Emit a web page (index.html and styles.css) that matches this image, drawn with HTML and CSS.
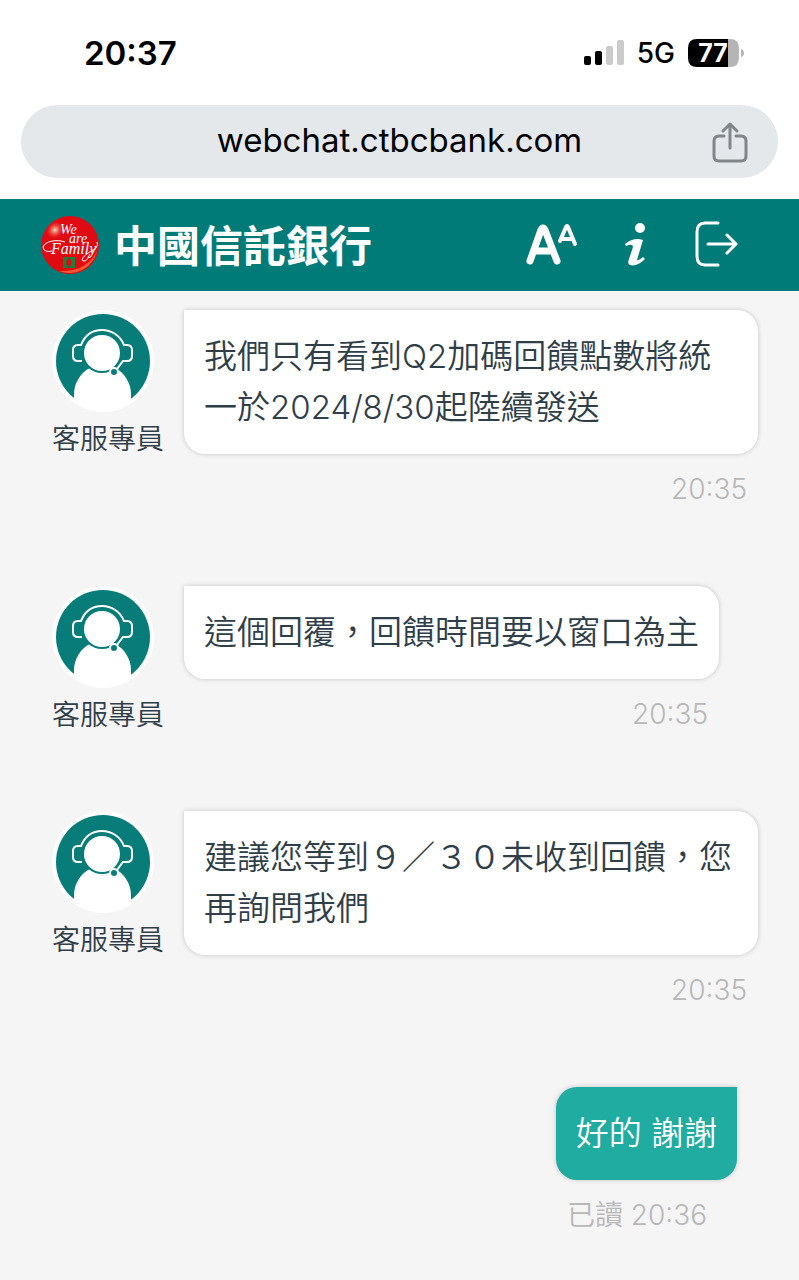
FILE: index.html
```html
<!DOCTYPE html>
<html lang="zh-Hant">
<head>
<meta charset="utf-8">
<meta name="viewport" content="width=device-width, initial-scale=1">
<title>中國信託銀行</title>
<link rel="stylesheet" href="styles.css">
</head>
<body>
<svg width="0" height="0" class="sprite" aria-hidden="true">
  <symbol id="agent" viewBox="0 0 102 102">
    <circle cx="51" cy="51" r="51" fill="#fff"/>
    <circle cx="51" cy="51" r="47" fill="#087c79"/>
    <path d="M22 84C22 73 29 62 38 58H63C72 62 79 73 79 84V91A49 49 0 0 1 22 91Z" fill="#fff"/>
    <circle cx="50" cy="43" r="20" fill="#087c79"/>
    <circle cx="50" cy="43" r="18" fill="#fff"/>
    <path d="M30 51H26Q21 51 21 46V40Q21 35 26 35H29C33 25 41 20 50 20S68 25 72 35H75Q80 35 80 40V46Q80 51 75 51H71L65 59" fill="none" stroke="#fff" stroke-width="2"/>
    <circle cx="62" cy="62" r="4" fill="#087c79" stroke="#fff" stroke-width="2"/>
  </symbol>
</svg>
<div class="status">
  <time class="clock">20:37</time>
  <div class="signals">
    <svg width="40" height="28" viewBox="0 0 40 28" aria-hidden="true"><rect y="17" width="7" height="9" rx="2"/><rect x="11" y="12" width="7" height="14" rx="2"/><rect x="22" y="7" width="7" height="19" rx="2" fill="#cbcbcb"/><rect x="33" y="1" width="7" height="25" rx="2" fill="#cbcbcb"/></svg>
    <span class="network">5G</span>
    <svg width="57" height="28" viewBox="0 0 57 28" role="img" aria-label="77%"><path d="M9 0H40V28H9Q0 28 0 19V9Q0 0 9 0"/><path d="M40 0H42Q51 0 51 9V19Q51 28 42 28H40ZM53 10Q56 11 56 14T53 18Z" fill="#b5b5b5"/><text x="25" y="23" class="charge">77</text></svg>
  </div>
</div>
<div class="address">
  <span class="url">webchat.ctbcbank.com</span>
  <button class="icon share" aria-label="分享"><svg width="36" height="42" viewBox="0 0 36 42"><path d="M12 15H7Q2 15 2 20V35Q2 40 7 40H29Q34 40 34 35V20Q34 15 29 15H24M18 27V4M11 10L18 3L25 10" fill="none" stroke="#81868a" stroke-width="3" stroke-linecap="round" stroke-linejoin="round"/></svg></button>
</div>
<header class="header">
  <svg class="ball" width="60" height="60" viewBox="0 0 60 60" role="img" aria-label="We are Family">
    <defs><radialGradient id="glow"><stop offset="0" stop-color="#ffe2bd"/><stop offset="1" stop-color="#e60c13" stop-opacity="0"/></radialGradient></defs>
    <circle cx="30" cy="30" r="29" fill="#e00a12"/>
    <path d="M57 36A28 28 0 0 1 19 56Q47 57 57 36" fill="#f4582f"/>
    <ellipse cx="15" cy="15" rx="10" ry="9" fill="url(#glow)" transform="rotate(-40 15 15)"/>
    <text x="20" y="19" class="motto">We</text><text x="29" y="28" class="motto">are</text><text x="11" y="39" class="motto family">Family</text>
    <path d="M25 27C17 24 5 26 3 32Q4 38 12 36M50 39Q46 49 42 45Q43 40 55 34Q59 30 57 27" fill="none" stroke="#fff" stroke-width="1"/>
    <path d="M23 42H35V53H23ZM27 45V50H31V45Z" fill="#14823a" fill-rule="evenodd"/><path d="M27 45H31V50H27ZM29 42V45M29 50V53" fill="#e00a12" stroke="#e00a12" stroke-width="1"/>
  </svg>
  <h1 class="brand">中國信託銀行</h1>
  <nav class="actions">
    <button class="icon" aria-label="字體大小"><svg width="52" height="46" viewBox="0 0 52 46" fill="none" stroke="#fff" stroke-linecap="round" stroke-linejoin="round"><path d="M4 39L15 8Q17 4 19 8L31 39M9 29H26" stroke-width="7"/><path d="M34 19L40 5Q41 3 42 5L49 22M35 17H46" stroke-width="4"/></svg></button>
    <button class="icon" aria-label="資訊"><svg width="22" height="46" viewBox="0 0 22 46" fill="#fff"><circle cx="15" cy="6" r="5"/><path d="M1 24L0 22Q9 15 18 18L12 38Q13 39 18 35L20 37Q12 45 5 43Q2 42 4 37L8 25Q8 21 1 24"/></svg></button>
    <button class="icon" aria-label="登出"><svg width="44" height="46" viewBox="0 0 44 46"><path d="M24 1H11Q3 1 3 10V34Q3 43 11 43H24M14 22H42M33 13L42 22L33 31" fill="none" stroke="#fff" stroke-width="3" stroke-linecap="round" stroke-linejoin="round"/></svg></button>
  </nav>
</header>
<main class="chat">
  <article class="row">
    <div class="agent"><svg class="avatar"><use href="#agent"/></svg><span>客服專員</span></div>
    <div class="message"><p class="bubble">我們只有看到Q2加碼回饋點數將統一於2024/8/30起陸續發送</p><time class="time">20:35</time></div>
  </article>
  <article class="row">
    <div class="agent"><svg class="avatar"><use href="#agent"/></svg><span>客服專員</span></div>
    <div class="message"><p class="bubble">這個回覆，回饋時間要以窗口為主</p><time class="time">20:35</time></div>
  </article>
  <article class="row">
    <div class="agent"><svg class="avatar"><use href="#agent"/></svg><span>客服專員</span></div>
    <div class="message"><p class="bubble">建議您等到９／３０未收到回饋，您再詢問我們</p><time class="time">20:35</time></div>
  </article>
  <article class="row sent">
    <div class="message"><p class="bubble">好的 謝謝</p><span class="time">已讀 <time>20:36</time></span></div>
  </article>
</main>
</body>
</html>
```
FILE: styles.css
```css
* { box-sizing: border-box; }
body {
  margin: 0;
  min-height: 100vh;
  display: flex;
  flex-direction: column;
  background: #fff;
  font-family: Inter, "Noto Sans CJK TC", sans-serif;
  color: #303e48;
}
.sprite { position: absolute; }
svg { display: block; flex: none; overflow: visible; }
.status {
  display: flex;
  justify-content: space-between;
  align-items: center;
  padding: 32px 54px 31px 84px;
  color: #000;
}
.clock { font-size: 33px; font-weight: 600; line-height: 42px; }
.signals { display: flex; align-items: center; gap: 13px; }
.network { font-size: 28px; font-weight: 500; line-height: 42px; }
.charge { fill: #fff; font-size: 25px; font-weight: 700; text-anchor: middle; }
.address {
  display: grid;
  grid-template-columns: 36px 1fr 36px;
  align-items: center;
  margin: 0 21px 21px;
  padding: 0 30px;
  min-height: 73px;
  border-radius: 37px;
  background: #e4e8eb;
}
.url { grid-column: 2; padding-bottom: 3px; text-align: center; font-size: 33px; line-height: 42px; color: #000; }
.icon { padding: 0; border: 0; background: none; }
.header {
  display: flex;
  align-items: center;
  padding: 16px 61px 16px 40px;
  background: #007b78;
}
.brand {
  margin: 0 0 0 14px;
  padding-top: 3px;
  color: #fff;
  font-size: 43px;
  font-weight: 700;
  line-height: 57px;
}
.actions { display: flex; align-items: center; gap: 47px; margin-left: auto; }
.motto { fill: #fff; font: italic 14px "Liberation Serif", serif; }
.family { font-size: 16px; }
.chat {
  flex: 1;
  display: flex;
  flex-direction: column;
  gap: 79px;
  padding: 19px 41px 46px 52px;
  background: #f5f5f5;
}
.row { display: flex; align-items: flex-start; gap: 20px; }
.agent { flex: none; width: 112px; font-size: 28px; font-weight: 350; line-height: 34px; white-space: nowrap; }
.avatar { width: 102px; height: 102px; margin-bottom: 10px; }
.message { display: flex; flex-direction: column; align-items: flex-end; }
.bubble {
  margin: 0;
  padding: 21px 20px;
  border-radius: 0 21px 21px 21px;
  background: #fff;
  box-shadow: 0 0 5px #0003;
  font-size: 33px;
  font-weight: 350;
  line-height: 51px;
}
.time { margin: 17px 11px 0 0; color: #b8b8b8; font-size: 28px; font-weight: 350; line-height: 36px; }
.sent { justify-content: flex-end; padding-right: 21px; }
.sent .bubble { border-radius: 21px 0 21px 21px; background: #20aca0; color: #fff; }
.sent .time { margin-right: 30px; }
```
